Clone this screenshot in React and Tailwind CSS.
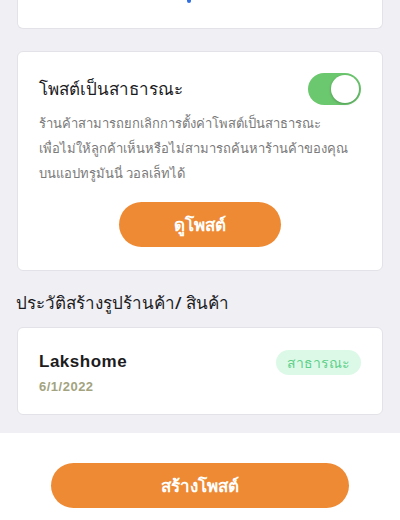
const Toggle = ({ on }) => (
  <div className={`flex h-[32px] w-[53px] shrink-0 items-center rounded-full p-[2px] ${on ? "justify-end bg-[#6cc86f]" : "justify-start bg-gray-200"}`}>
    <div className="h-[28px] w-[28px] rounded-full bg-white shadow-[0_1px_3px_rgba(0,0,0,0.25)]" />
  </div>
)

const PublicPostCard = () => (
  <div className="mx-[17px] mt-[22px] shrink-0 rounded-[6px] border border-[#e2e2e8] bg-white px-[21px] pb-[23px] pt-[21px]">
    <div className="flex items-center justify-between">
      <h2 className="text-[17px] font-medium text-[#1c1c1e]">โพสต์เป็นสาธารณะ</h2>
      <Toggle on />
    </div>
    <p className="mt-[6px] whitespace-nowrap text-[13px] leading-[25px] text-[#7a7a7a]">
      ร้านค้าสามารถยกเลิกการตั้งค่าโพสต์เป็นสาธารณะ
      <br />
      เพื่อไม่ให้ลูกค้าเห็นหรือไม่สามารถค้นหาร้านค้าของคุณ
      <br />
      บนแอปทรูมันนี่ วอลเล็ทได้
    </p>
    <div className="mt-[16px] flex justify-center">
      <button className="h-[45px] w-[162px] rounded-full bg-[#ee8a34] text-[17px] font-bold text-white">
        ดูโพสต์
      </button>
    </div>
  </div>
)

const HistoryItem = ({ name, date, status }) => (
  <div className="mx-[17px] mt-[11px] flex shrink-0 items-start justify-between rounded-[6px] border border-[#e2e2e8] bg-white px-[21px] pb-[17px] pt-[21px]">
    <div>
      <div className="font-['Liberation_Sans',sans-serif] text-[17px] font-bold tracking-[0.5px] text-[#1c1c1e]">{name}</div>
      <div className="mt-[3px] font-['Liberation_Sans',sans-serif] text-[13px] font-bold tracking-[0.5px] text-[#a3a37f]">{date}</div>
    </div>
    <span className="mt-[1px] rounded-full bg-[#dcf9e8] px-[11px] py-[2px] text-[14px] text-[#5fd08a]">{status}</span>
  </div>
)

export default function App() {
  return (
    <div className="flex h-[520px] w-[400px] flex-col overflow-hidden bg-[#efeff4] font-['Noto_Sans',sans-serif]">
      <div className="mx-[17px] h-[29px] shrink-0 rounded-b-[6px] border border-t-0 border-[#e2e2e8] bg-white">
        <div className="ml-[169px] h-[3px] w-[4px] rounded-b-full bg-[#2f6fe0]" />
      </div>
      <PublicPostCard />
      <h3 className="mx-[16px] mt-[19px] shrink-0 text-[17px] font-medium text-[#1c1c1e]">ประวัติสร้างรูปร้านค้า/ สินค้า</h3>
      <HistoryItem name="Lakshome" date="6/1/2022" status="สาธารณะ" />
      <div className="mt-auto flex h-[87px] shrink-0 items-start justify-center bg-white pt-[30px]">
        <button className="h-[45px] w-[298px] rounded-full bg-[#ee8a34] text-[17px] font-bold text-white">
          สร้างโพสต์
        </button>
      </div>
    </div>
  )
}
